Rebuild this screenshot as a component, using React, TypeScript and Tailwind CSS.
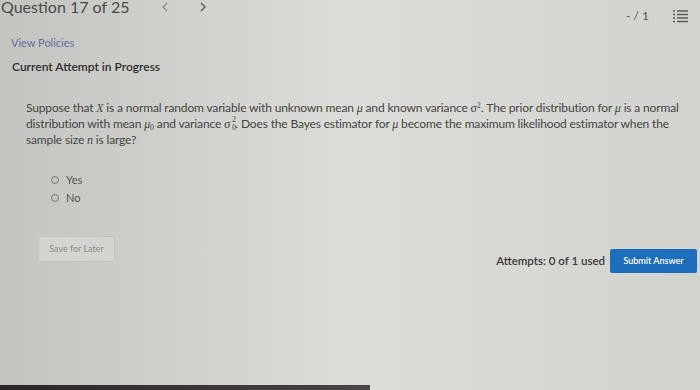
export default function App() {
  const serif = { fontFamily: "'Liberation Serif', serif" };
  return (
    <div
      className="relative w-[700px] h-[390px] overflow-hidden bg-gradient-to-r from-[#c3c4bf] via-[#dcddd8] to-[#d2d3ce] text-[#3d3d3d]"
      style={{ fontFamily: "Lato, 'Open Sans', sans-serif" }}
    >
      {/* Header */}
      <div className="flex items-start h-[30px]">
        <div className="flex items-center -mt-[2px] pl-[1px]">
          <span className="text-[16px] text-[#4a4a4a] leading-[18px]">Question 17 of 25</span>
          <svg className="ml-[33px]" width="6" height="10" viewBox="0 0 6 10">
            <path d="M5 1 1 5l4 4" fill="none" stroke="#8a8a8a" strokeWidth="1.3" />
          </svg>
          <svg className="ml-[32px]" width="6" height="10" viewBox="0 0 6 10">
            <path d="M1 1l4 4-4 4" fill="none" stroke="#555" strokeWidth="1.3" />
          </svg>
        </div>
        <div className="ml-auto flex items-center mt-[7px] mr-[12px]">
          <span className="text-[12px] text-[#555]">- / 1</span>
          <svg className="ml-[24px]" width="15" height="14" viewBox="0 0 15 14">
            <g stroke="#555" strokeWidth="1.4">
              <line x1="0" y1="2" x2="2" y2="2" />
              <line x1="4" y1="2" x2="15" y2="2" />
              <line x1="0" y1="5.5" x2="2" y2="5.5" />
              <line x1="4" y1="5.5" x2="15" y2="5.5" />
              <line x1="0" y1="9" x2="2" y2="9" />
              <line x1="4" y1="9" x2="15" y2="9" />
              <line x1="0" y1="12.5" x2="2" y2="12.5" />
              <line x1="4" y1="12.5" x2="15" y2="12.5" />
            </g>
          </svg>
        </div>
      </div>

      <div className="pl-[11px] mt-[6px]">
        <div className="text-[11px] text-[#5d6f9e] leading-[14px]">View Policies</div>
        <div className="mt-[10px] text-[12px] font-semibold text-[#2f2f2f] leading-[14px] pl-[1px]">
          Current Attempt in Progress
        </div>
      </div>

      {/* Question */}
      <p className="mt-[26px] pl-[26px] pr-[10px] text-[12px] leading-[16px] tracking-[-0.15px] text-[#454545]">
        Suppose that <i style={serif}>X</i> is a normal random variable with unknown mean{" "}
        <i style={serif}>μ</i> and known variance <span style={serif}>σ<sup className="text-[8px]">2</sup></span>. The prior
        distribution for <i style={serif}>μ</i> is a normal distribution with mean{" "}
        <span style={serif}>
          <i>μ</i>
          <sub className="text-[8px]">0</sub>
        </span>{" "}
        and variance{" "}
        <span className="relative inline-block pr-[5px]" style={serif}>
          σ
          <span className="absolute left-[8px] top-[0px] text-[8px] leading-none">2</span>
          <span className="absolute left-[8px] top-[8px] text-[8px] leading-none">0</span>
        </span>
        . Does the Bayes estimator for <i style={serif}>μ</i> become the maximum likelihood estimator when the sample size{" "}
        <i style={serif}>n</i> is large?
      </p>

      {/* Options */}
      <div className="mt-[25px] pl-[51px] flex flex-col gap-[4px] text-[11px] text-[#555]">
        <label className="flex items-center gap-[7px] h-[14px]">
          <span className="w-[8px] h-[8px] rounded-full border border-[#777]" />
          Yes
        </label>
        <label className="flex items-center gap-[7px] h-[14px]">
          <span className="w-[8px] h-[8px] rounded-full border border-[#777]" />
          No
        </label>
      </div>

      {/* Footer actions */}
      <div className="mt-[19px] flex items-start pl-[38px] pr-[3px]">
        <button className="mt-[12px] w-[77px] h-[26px] border border-[#c2c3be] rounded-[2px] text-[9px] text-[#8a8a8a] bg-[#d4d5d0]">
          Save for Later
        </button>
        <div className="ml-auto flex items-center gap-[5px] mt-[25px]">
          <span className="text-[11.5px] font-semibold text-[#3a3a3a]">Attempts: 0 of 1 used</span>
          <button className="w-[87px] h-[24px] rounded-[2px] bg-[#1d6ebd] text-white text-[9px] font-semibold">
            Submit Answer
          </button>
        </div>
      </div>

      {/* Bottom edge of the screen */}
      <div className="absolute left-0 bottom-0 w-[370px] h-[5px] bg-gradient-to-r from-[#2a2424] to-[#4a4444]" />
    </div>
  );
}
